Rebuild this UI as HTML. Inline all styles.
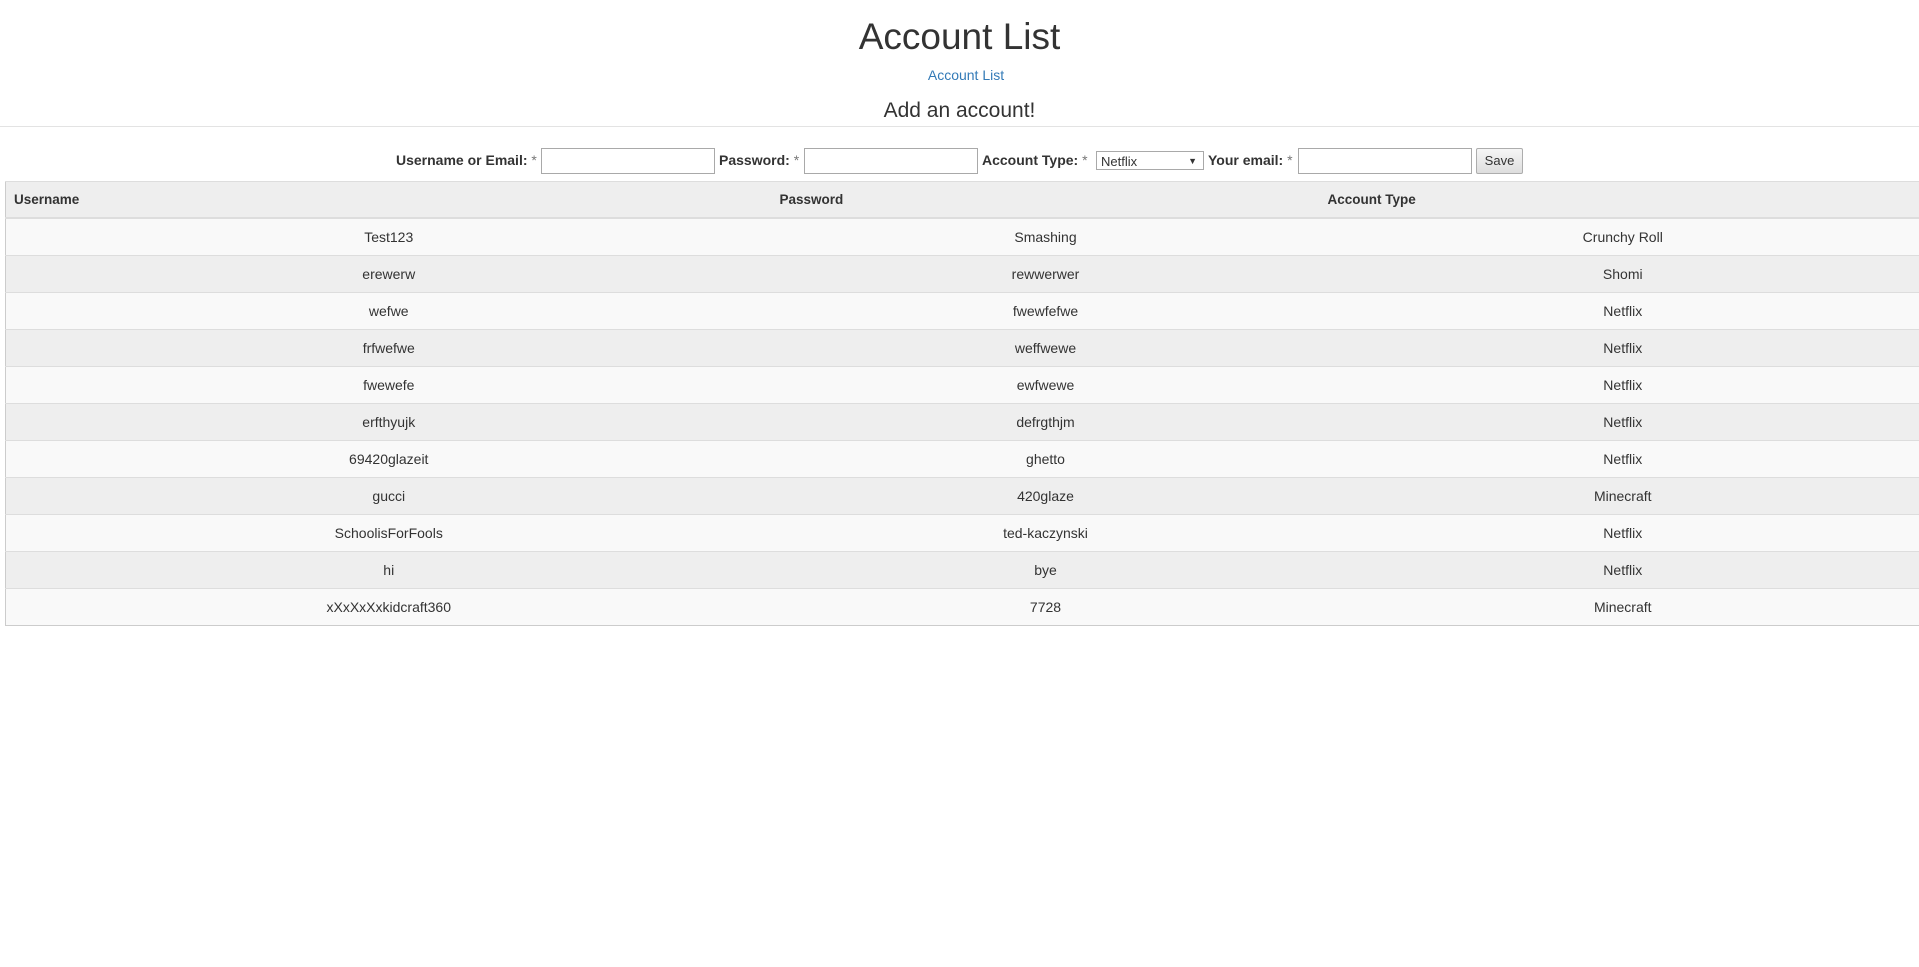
<!DOCTYPE html>
<html><head><meta charset="utf-8"><style>
body{margin:0;width:1919px;height:967px;background:#fff;font-family:"Liberation Sans",Arial,sans-serif;color:#333;font-size:14px;position:relative;overflow:hidden}
.a{position:absolute;white-space:nowrap}
h1{position:absolute;margin:0;left:0;width:1919px;text-align:center;top:15px;font-size:37px;font-weight:500;line-height:44px}
.lnk{left:0;width:1932px;text-align:center;top:67px;color:#337ab7}
.h3{left:0;width:1919px;text-align:center;top:97px;font-size:21px;line-height:28px}
hr{position:absolute;top:126px;left:0;width:1919px;margin:0;border:0;border-top:1px solid #e3e3e3}
label{font-weight:bold;top:152px}
label span{color:#777;font-weight:normal}
.in{top:148px;height:24px;border:1px solid #a9a9a9;background:#fff}
.sel{top:151px;height:19px;border:1px solid #a9a9a9;background:#fff;font-size:13px;line-height:19px;padding-left:4px;box-sizing:border-box}
.btn{top:148px;height:26px;box-sizing:border-box;border:1px solid #adadad;border-radius:2px;background:linear-gradient(#f6f6f6,#dedede);font-size:13px;line-height:24px;text-align:center}
table{position:absolute;left:5px;top:181px;width:1922px;border-collapse:collapse;border:1px solid #ccc}
td,th{height:36px;padding:0 8px;border-top:1px solid #ddd;font-size:14px}
th{text-align:left;background:#eee;border-bottom:2px solid #ddd;height:35px;font-size:13.5px}
td{text-align:center}
tbody tr:nth-child(odd) td{background:#f9f9f9}
tbody tr:nth-child(even) td{background:#eee}
</style></head><body>
<h1>Account List</h1>
<div class="a lnk">Account List</div>
<div class="a h3">Add an account!</div>
<hr>
<label class="a" style="left:396px">Username or Email: <span>*</span></label>
<div class="a in" style="left:541px;width:172px"></div>
<label class="a" style="left:719px">Password: <span>*</span></label>
<div class="a in" style="left:804px;width:172px"></div>
<label class="a" style="left:982px">Account Type: <span>*</span></label>
<div class="a sel" style="left:1096px;width:108px">Netflix<span style="position:absolute;right:6px;font-size:9px">▼</span></div>
<label class="a" style="left:1208px">Your email: <span>*</span></label>
<div class="a in" style="left:1298px;width:172px"></div>
<div class="a btn" style="left:1476px;width:47px">Save</div>
<table>
<colgroup><col style="width:766px"><col style="width:548px"><col></colgroup>
<thead><tr><th>Username</th><th>Password</th><th>Account Type</th></tr></thead>
<tbody>
<tr><td>Test123</td><td>Smashing</td><td>Crunchy Roll</td></tr>
<tr><td>erewerw</td><td>rewwerwer</td><td>Shomi</td></tr>
<tr><td>wefwe</td><td>fwewfefwe</td><td>Netflix</td></tr>
<tr><td>frfwefwe</td><td>weffwewe</td><td>Netflix</td></tr>
<tr><td>fwewefe</td><td>ewfwewe</td><td>Netflix</td></tr>
<tr><td>erfthyujk</td><td>defrgthjm</td><td>Netflix</td></tr>
<tr><td>69420glazeit</td><td>ghetto</td><td>Netflix</td></tr>
<tr><td>gucci</td><td>420glaze</td><td>Minecraft</td></tr>
<tr><td>SchoolisForFools</td><td>ted-kaczynski</td><td>Netflix</td></tr>
<tr><td>hi</td><td>bye</td><td>Netflix</td></tr>
<tr><td>xXxXxXxkidcraft360</td><td>7728</td><td>Minecraft</td></tr>
</tbody>
</table>
</body></html>
